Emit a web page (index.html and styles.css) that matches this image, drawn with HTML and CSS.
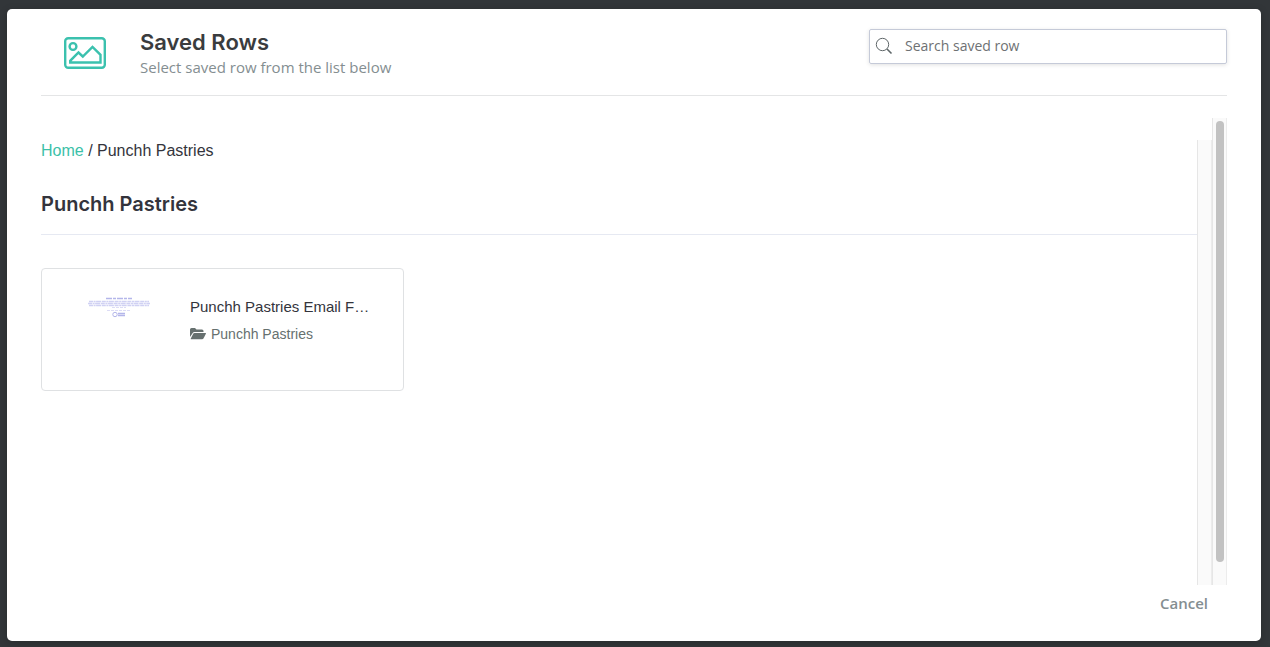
FILE: index.html
```html
<!DOCTYPE html>
<html lang="en">
<head>
    <meta charset="UTF-8">
    <meta name="viewport" content="width=device-width, initial-scale=1.0">
    <title>Saved Rows</title>
    <link rel="stylesheet" href="styles.css">
</head>
<body>
    <div class="modal" role="dialog" aria-labelledby="modal-title">
        <header class="modal-header">
            <svg class="header-icon" width="44" height="34" viewBox="0 0 44 34" fill="none" stroke="#3bc1ae" stroke-width="2.4">
                <rect x="2.2" y="2.2" width="39.6" height="29.6" rx="3"/>
                <circle cx="10" cy="10.5" r="3.4"/>
                <path d="M7.200 26.500v-1.700L15.500 16.500l4.300 4L29.500 11l8 7.800v7.700z"/>
            </svg>
            <div class="header-text">
                <h1 id="modal-title">Saved Rows</h1>
                <p>Select saved row from the list below</p>
            </div>
            <label class="search">
                <svg width="18" height="18" viewBox="0 0 18 18" fill="none" stroke="#5f6769">
                    <circle cx="7.5" cy="7.5" r="6.2"/>
                    <path d="M12 12l4.500 4.500" stroke-width="1.6"/>
                </svg>
                <input type="search" placeholder="Search saved row" aria-label="Search saved row">
            </label>
        </header>

        <main class="modal-body">
            <div class="content">
                <nav class="breadcrumb">
                    <a href="#">Home</a> / <span>Punchh Pastries</span>
                </nav>
                <h2>Punchh Pastries</h2>
                <div class="row-list">
                    <article class="row-card">
                        <div class="thumb">
                            <svg width="64" height="24" viewBox="0 0 64 24" fill="none" stroke="#b4b6ea">
                                <path d="M19 2.500h26" stroke-width="1.6" stroke-dasharray="6 1 3 1"/>
                                <path d="M2 5.500h60M1 7.500h62M2 9.500h60" stroke="#d0d1f3" stroke-width="1.6" stroke-dasharray="4 .6 2 .5 5 .7"/>
                                <path d="M25 11.500h14M20 14.500h24" stroke="#dcdcf5" stroke-dasharray="3 1"/>
                                <circle cx="28" cy="18.500" r="2.2"/>
                                <path d="M31 17.500h7M31 19.500h7" stroke-width="1.6"/>
                            </svg>
                        </div>
                        <div class="row-info">
                            <h3>Punchh Pastries Email F…</h3>
                            <p>
                                <svg width="16" height="12" viewBox="0 0 16 12" fill="#66706f">
                                    <path d="M0 9V1.500Q0 0 1.500 0H5l1.500 1.500H12Q13.500 1.500 13.500 3v1H4.500Q3.300 4 2.700 5z"/>
                                    <path d="M4.500 5H15.500Q16.200 5 15.900 5.700L13.600 10.300Q13.100 11.300 12 11.300H1.200Q.4 11.300.8 10.500L3.200 5.800Q3.700 5 4.500 5z"/>
                                </svg>
                                Punchh Pastries
                            </p>
                        </div>
                    </article>
                </div>
            </div>
            <div class="scroll-track inner"></div>
            <div class="scroll-track outer"><div class="scroll-thumb"></div></div>
        </main>

        <footer class="modal-footer">
            <button type="button">Cancel</button>
        </footer>
    </div>
</body>
</html>
```
FILE: styles.css
```css
* {
    margin: 0;
    padding: 0;
    box-sizing: border-box;
}

body {
    display: flex;
    min-height: 100vh;
    padding: 9px 9px 6px 7px;
    font-family: "Liberation Sans", Arial, sans-serif;
    background-color: #323639;
    color: #33343c;
}

.modal {
    flex: 1;
    min-width: 0;
    display: flex;
    flex-direction: column;
    padding: 0 34px;
    background-color: #fff;
    border-radius: 5px;
    box-shadow: 0 2px 8px rgba(0, 0, 0, 0.2);
}

/* Header */
.modal-header {
    display: flex;
    align-items: flex-start;
    padding: 20px 0 16px;
    border-bottom: 1px solid #e4e5e6;
}

.header-icon {
    margin: 7px 33px 0 22px;
}

.header-text {
    flex: 1;
}

.header-text h1 {
    font-family: Inter, sans-serif;
    font-size: 22px;
    font-weight: 600;
    line-height: 26px;
    color: #3a3c3e;
}

.header-text p {
    font-family: "Open Sans", sans-serif;
    font-size: 15px;
    line-height: 24px;
    color: #848e91;
}

.search {
    display: flex;
    align-items: center;
    gap: 12px;
    width: 358px;
    height: 35px;
    padding: 0 5px 2px;
    border: 1px solid #c5cad8;
    border-radius: 2px;
    box-shadow: 0 1px 4px rgba(0, 0, 0, 0.12);
}

.search input {
    flex: 1;
    min-width: 0;
    border: none;
    outline: none;
    background: none;
    font-family: "Open Sans", sans-serif;
    font-size: 14px;
    color: #33343c;
}

.search input::placeholder {
    color: #6e7173;
}

/* Body */
.modal-body {
    flex: 1;
    display: flex;
    padding-top: 22px;
}

.content {
    flex: 1;
    min-width: 0;
    padding-top: 22px;
}

.breadcrumb {
    font-size: 16px;
    line-height: 22px;
}

.breadcrumb a {
    color: #3bc1a8;
    text-decoration: none;
}

.content h2 {
    padding: 30px 0 18px;
    border-bottom: 1px solid #e6e9f2;
    font-family: Inter, sans-serif;
    font-size: 20px;
    font-weight: 600;
    line-height: 24px;
}

.row-list {
    display: flex;
    flex-wrap: wrap;
    gap: 20px;
    padding-top: 33px;
}

.row-card {
    display: flex;
    width: 363px;
    min-height: 123px;
    padding: 26px 26px 26px 0;
    border: 1px solid #dfe1e3;
    border-radius: 4px;
}

.thumb {
    width: 148px;
    padding: 1px 0 0 45px;
}

.row-info {
    flex: 1;
    min-width: 0;
}

.row-info h3 {
    overflow: hidden;
    font-size: 15px;
    font-weight: 400;
    line-height: 24px;
    white-space: nowrap;
    text-overflow: ellipsis;
}

.row-info p {
    display: flex;
    align-items: center;
    gap: 5px;
    padding-top: 4px;
    font-size: 14px;
    line-height: 22px;
    color: #66706f;
}

/* Scroll tracks */
.scroll-track {
    width: 15px;
    background-color: #fafafa;
    border-left: 1px solid #e6e6e6;
    border-right: 1px solid #ececec;
}

.scroll-track.inner {
    margin-top: 22px;
}

.scroll-track.outer {
    padding: 3px 2px 0 3px;
}

.scroll-thumb {
    height: 95%;
    border-radius: 4px;
    background-color: #c2c2c2;
}

/* Footer */
.modal-footer {
    display: flex;
    justify-content: flex-end;
    padding: 5px 19px 25px;
}

.modal-footer button {
    border: none;
    background: none;
    font-family: "Open Sans", sans-serif;
    font-size: 15px;
    font-weight: 600;
    line-height: 26px;
    color: #848e91;
    cursor: pointer;
}
```
